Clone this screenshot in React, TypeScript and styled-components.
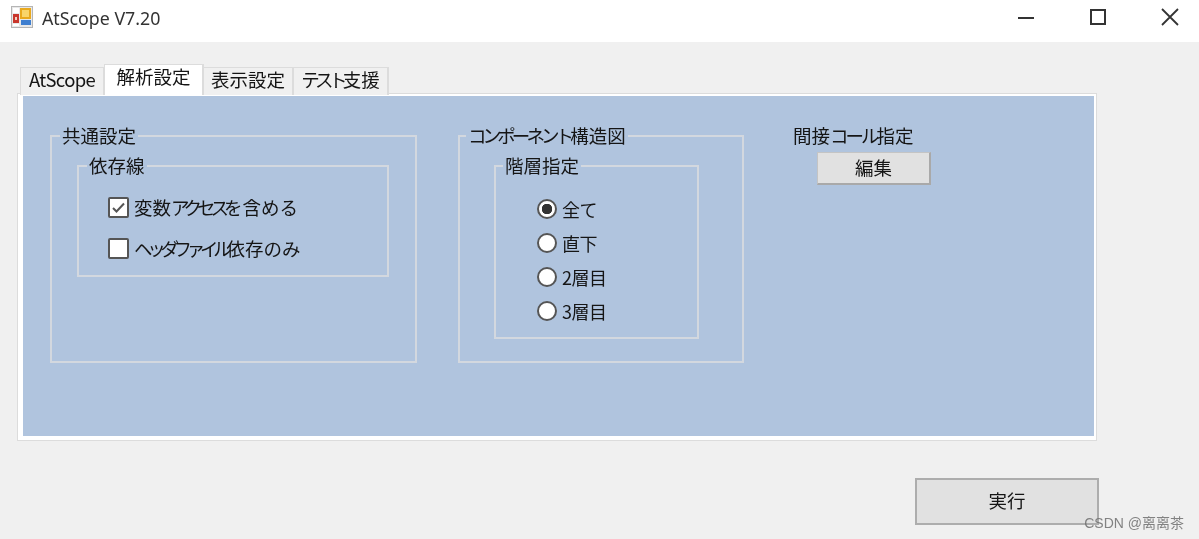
import { type FC, type ReactNode } from "react";
import styled, { createGlobalStyle } from "styled-components";

// the katakana in the reference is narrower than the kanji next to it
const Kana = styled.span<{ $spacing?: number }>`
  letter-spacing: ${(p) => p.$spacing ?? -5}px;
`;

const tabs: { id: string; width: number; content: ReactNode }[] = [
  { id: "atscope", width: 85, content: <Kana $spacing={-0.7}>AtScope</Kana> },
  { id: "analysis", width: 100, content: "解析設定" },
  { id: "display", width: 91, content: "表示設定" },
  {
    id: "test",
    width: 96,
    content: (
      <>
        <Kana $spacing={-4.6}>テスト</Kana>支援
      </>
    ),
  },
];
const activeTab = "analysis";
const radios = ["全て", "直下", "2層目", "3層目"];

const App: FC = () => {
  return (
    <Window>
      <GlobalStyle />
      <TitleBar>
        <AppIcon />
        <Title>AtScope V7.20</Title>
        <WindowButtons>
          <WindowButton aria-label="minimize">
            <svg width="16" height="16" viewBox="0 0 16 16">
              <path d="M0 9h16" stroke="#333" strokeWidth="2" />
            </svg>
          </WindowButton>
          <WindowButton aria-label="maximize">
            <svg width="16" height="16" viewBox="0 0 16 16" fill="none">
              <path d="M1 1h14v14H1z" stroke="#333" strokeWidth="2" />
            </svg>
          </WindowButton>
          <WindowButton aria-label="close">
            <svg width="18" height="18" viewBox="0 0 18 18" fill="none">
              <path d="M1 1l16 16M17 1L1 17" stroke="#333" strokeWidth="1.8" />
            </svg>
          </WindowButton>
        </WindowButtons>
      </TitleBar>

      <Body>
        <TabStrip>
          {tabs.map((tab) => (
            <Tab key={tab.id} $active={tab.id === activeTab} $width={tab.width}>
              {tab.content}
            </Tab>
          ))}
        </TabStrip>

        <TabPanel>
          <SettingsArea>
            <CommonGroup>
              <GroupLegend>共通設定</GroupLegend>
              <DependencyGroup>
                <GroupLegend>依存線</GroupLegend>
                <CheckList>
                  <CheckRow>
                    <CheckBox>
                      <svg width="15" height="15" viewBox="0 0 15 15" fill="none">
                        <path d="M2 8l3.5 3.5L13 3.5" stroke="#555" strokeWidth="2" />
                      </svg>
                    </CheckBox>
                    <span>
                      変数<Kana>アクセス</Kana>を含める
                    </span>
                  </CheckRow>
                  <CheckRow>
                    <CheckBox />
                    <span>
                      <Kana $spacing={-5.3}>ヘッダファイル</Kana>依存のみ
                    </span>
                  </CheckRow>
                </CheckList>
              </DependencyGroup>
            </CommonGroup>

            <StructureGroup>
              <GroupLegend>
                <Kana $spacing={-3.9}>コンポーネント</Kana>構造図
              </GroupLegend>
              <LevelGroup>
                <GroupLegend>階層指定</GroupLegend>
                <RadioList>
                  {radios.map((label, i) => (
                    <RadioRow key={label}>
                      <RadioDot $checked={i === 0} />
                      {label}
                    </RadioRow>
                  ))}
                </RadioList>
              </LevelGroup>
            </StructureGroup>

            <IndirectColumn>
              <IndirectLabel>
                間接<Kana $spacing={-3}>コール</Kana>指定
              </IndirectLabel>
              <EditButton>編集</EditButton>
            </IndirectColumn>
          </SettingsArea>
        </TabPanel>

        <Footer>
          <RunButton>実行</RunButton>
        </Footer>
      </Body>

      <Watermark>CSDN @离离茶</Watermark>
    </Window>
  );
};

export default App;

// App icon, blurry in the original so only the colour blocks are kept
const AppIcon: FC = () => (
  <svg width="22" height="22" viewBox="0 0 22 22" style={{ flexShrink: 0 }}>
    <rect x="0.5" y="0.5" width="21" height="21" fill="#e8e8e8" stroke="#b5b5b5" />
    <rect x="2" y="2" width="6" height="5" fill="#fff" />
    <rect x="2" y="8" width="6" height="9" fill="#c9362c" />
    <rect x="4" y="11" width="2" height="3" fill="#f4d0c0" />
    <rect x="9" y="2" width="11" height="11" fill="#e9a91e" />
    <rect x="11" y="4" width="7" height="7" fill="#f9d56a" />
    <rect x="10" y="14" width="10" height="5" fill="#3f7fd0" />
    <rect x="2" y="18" width="6" height="2" fill="#fff" />
  </svg>
);

const GlobalStyle = createGlobalStyle`
  html, body {
    margin: 0;
    padding: 0;
    background: #f0f0f0;
  }
  body {
    font-family: "Noto Sans CJK JP", "Noto Sans", sans-serif;
    color: #151515;
  }
`;

const Window = styled.div`
  position: relative;
  width: 1199px;
  height: 539px;
  overflow: hidden;
  display: flex;
  flex-direction: column;
  background: #f0f0f0;
  filter: blur(0.35px);
`;

const TitleBar = styled.div`
  height: 42px;
  flex-shrink: 0;
  display: flex;
  align-items: center;
  padding: 0 0 8px 11px;
  box-sizing: border-box;
  background: #fff;
`;

const Title = styled.span`
  margin: 2px 0 0 9px;
  font-family: "Noto Sans", sans-serif;
  font-size: 17.8px;
  color: #333;
`;

const WindowButtons = styled.div`
  margin-left: auto;
  margin-right: -7px;
  display: flex;
  align-items: center;
`;

const WindowButton = styled.div`
  width: 72px;
  height: 34px;
  display: flex;
  align-items: center;
  justify-content: center;
`;

const Body = styled.div`
  flex: 1;
  display: flex;
  flex-direction: column;
  padding: 22px 102px 12px 17px;
  min-height: 0;
`;

const TabStrip = styled.div`
  display: flex;
  align-items: flex-end;
  height: 31px;
  padding-left: 4px;
  position: relative;
  z-index: 1;
  margin-bottom: -2px;
`;

const Tab = styled.div<{ $active: boolean; $width: number }>`
  box-sizing: border-box;
  display: flex;
  align-items: center;
  justify-content: center;
  font-size: 18.5px;
  line-height: 1;
  width: ${(p) => p.$width}px;
  height: ${(p) => (p.$active ? "31px" : "28px")};
  padding-bottom: ${(p) => (p.$active ? "8px" : "5px")};
  background: ${(p) => (p.$active ? "#fff" : "#f0f0f0")};
  border: 2px solid #dcdcdc;
  border-width: 1px 2px 0 1px;
  margin-left: -1px;
`;

const TabPanel = styled.div`
  box-sizing: border-box;
  height: 348px;
  flex-shrink: 0;
  padding: 3px 2px 4px 5px;
  background: #fff;
  border: 1px solid #dcdcdc;
  border-width: 0 1px 1px 1px;
  box-shadow: inset 0 1px 0 #dcdcdc;
`;

const SettingsArea = styled.div`
  height: 100%;
  display: flex;
  align-items: flex-start;
  padding: 30px 0 0 27px;
  box-sizing: border-box;
  background: #b0c4de;
`;

const GroupBase = styled.fieldset`
  box-sizing: border-box;
  margin: 0;
  padding: 0;
  border: 2px solid #d3d8df;
  min-width: 0;
`;

const GroupLegend = styled.legend`
  padding: 0 2px;
  font-size: 18.5px;
  height: 20px;
  line-height: 18px;
`;

const CommonGroup = styled(GroupBase)`
  width: 367px;
  height: 237px;
  & > legend {
    margin-left: 8px;
  }
`;

const DependencyGroup = styled(GroupBase)`
  width: 312px;
  height: 121px;
  margin: 10px 0 0 25px;
  & > legend {
    margin-left: 8px;
  }
`;

const CheckList = styled.div`
  padding: 20px 0 0 29px;
  display: flex;
  flex-direction: column;
  gap: 19px;
`;

const CheckRow = styled.label`
  display: flex;
  align-items: center;
  height: 22px;
  font-size: 18.5px;
`;

const CheckBox = styled.span`
  box-sizing: border-box;
  width: 21px;
  height: 21px;
  margin-right: 5px;
  flex-shrink: 0;
  display: flex;
  align-items: center;
  justify-content: center;
  background: #fff;
  border: 2px solid #555;
  border-radius: 2px;
`;

const StructureGroup = styled(GroupBase)`
  width: 286px;
  height: 237px;
  margin-left: 41px;
  & > legend {
    margin-left: 6px;
  }
`;

const LevelGroup = styled(GroupBase)`
  width: 205px;
  height: 183px;
  margin: 10px 0 0 34px;
  & > legend {
    margin-left: 7px;
  }
`;

const RadioList = styled.div`
  padding: 22px 0 0 41px;
  display: flex;
  flex-direction: column;
  gap: 12px;
`;

const RadioRow = styled.label`
  display: flex;
  align-items: center;
  height: 22px;
  font-size: 18px;
  letter-spacing: -0.5px;
`;

const RadioDot = styled.span<{ $checked: boolean }>`
  box-sizing: border-box;
  width: 20px;
  height: 20px;
  margin-right: 5px;
  flex-shrink: 0;
  border-radius: 50%;
  border: 2px solid #555;
  background: ${(p) =>
    p.$checked ? "radial-gradient(circle, #333 0 5px, #fff 5.5px)" : "#fff"};
`;

const IndirectColumn = styled.div`
  margin-left: 49px;
  display: flex;
  flex-direction: column;
  align-items: flex-start;
`;

const IndirectLabel = styled.div`
  font-size: 18.5px;
  height: 20px;
  line-height: 18px;
`;

const ButtonBase = styled.div`
  box-sizing: border-box;
  display: flex;
  align-items: center;
  justify-content: center;
  padding-bottom: 3px;
  background: #e1e1e1;
  font-size: 18.5px;
  border: 2px solid #adadad;
`;

const EditButton = styled(ButtonBase)`
  width: 114px;
  height: 33px;
  margin: 6px 0 0 24px;
  border-width: 1px 2px 2px 1px;
  border-color: #c4c4c4 #a9a9a9 #a9a9a9 #c4c4c4;
`;

const Footer = styled.div`
  display: flex;
  justify-content: flex-end;
  margin-top: 37px;
  margin-right: -2px;
`;

const RunButton = styled(ButtonBase)`
  width: 184px;
  height: 47px;
`;

const Watermark = styled.div`
  position: absolute;
  right: 15px;
  bottom: 7px;
  font-family: "Liberation Sans", "Noto Sans CJK SC", sans-serif;
  font-size: 14px;
  color: rgba(110, 110, 110, 0.85);
`;
